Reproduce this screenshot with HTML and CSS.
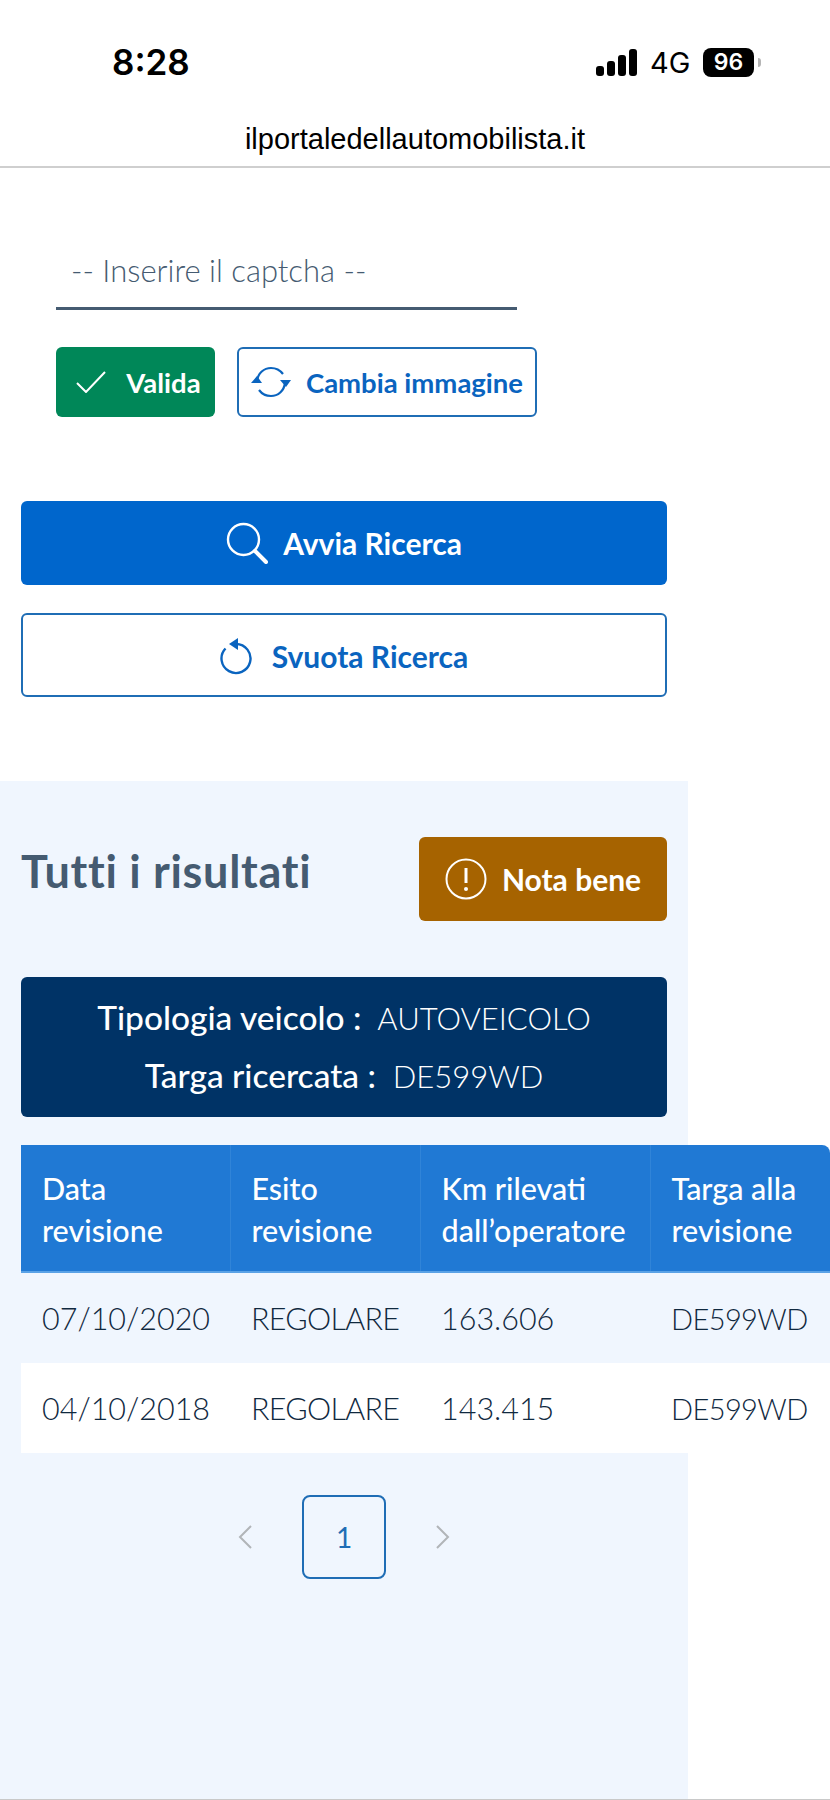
FILE: index.html
```html
<!DOCTYPE html>
<html lang="it">
<head>
    <meta charset="UTF-8">
    <meta name="viewport" content="width=device-width, initial-scale=1.0">
    <title>Il Portale dell'Automobilista</title>
    <link rel="stylesheet" href="styles.css">
</head>
<body>

    <div class="status-bar">
        <span class="clock">8:28</span>
        <div class="status-right">
            <svg class="signal" width="41" height="27" viewBox="0 0 41 27">
                <rect x="0" y="17" width="8" height="10" rx="3"/>
                <rect x="11" y="12" width="8" height="15" rx="3"/>
                <rect x="22" y="6" width="8" height="21" rx="3"/>
                <rect x="33" y="0" width="8" height="27" rx="3"/>
            </svg>
            <span class="network">4G</span>
            <span class="battery">96</span>
            <span class="battery-nub"></span>
        </div>
    </div>
    <div class="url-bar">ilportaledellautomobilista.it</div>

    <div class="search-panel">
        <div class="captcha-input">-- Inserire il captcha --</div>
        <div class="captcha-actions">
            <button class="btn btn-valid">
                <svg width="30" height="22" viewBox="0 0 30 22" fill="none" stroke="currentColor" stroke-width="2"><path d="M1 12l9 9L29 1"/></svg>
                Valida
            </button>
            <button class="btn btn-outline btn-change">
                <svg width="40" height="32" viewBox="0 0 40 32" fill="none" stroke="currentColor" stroke-width="2.2">
                    <path d="M6 15C7 7 13 2 20 2c5 0 9 2 12 6"/>
                    <path d="M34 17c-1 8-7 13-14 13-5 0-9-2-12-6"/>
                    <path d="M0 17l6-7 5 7z" fill="currentColor" stroke="none"/>
                    <path d="M29 14h11l-5 7z" fill="currentColor" stroke="none"/>
                </svg>
                Cambia immagine
            </button>
        </div>
        <button class="btn btn-wide btn-primary">
            <svg width="42" height="42" viewBox="0 0 42 42" fill="none" stroke="currentColor" stroke-width="2.4">
                <circle cx="17.500" cy="17.500" r="15.500"/>
                <path d="M29 29l11 11" stroke-width="4" stroke-linecap="round"/>
            </svg>
            Avvia Ricerca
        </button>
        <button class="btn btn-wide btn-outline btn-reset">
            <svg width="32" height="37" viewBox="0 0 32 37" fill="none" stroke="currentColor" stroke-width="2.4">
                <path d="M16 6A14.500 14.500 0 1 1 5.500 10.500"/>
                <path d="M18 0v12L9 6z" fill="currentColor" stroke="none"/>
            </svg>
            Svuota Ricerca
        </button>
    </div>

    <div class="results-panel">
        <div class="results-head">
            <h2>Tutti i risultati</h2>
            <button class="btn btn-note">
                <svg width="42" height="42" viewBox="0 0 42 42" fill="none" stroke="currentColor" stroke-width="2">
                    <circle cx="21" cy="21" r="19.500"/>
                    <path d="M21 10v15" stroke-width="3"/>
                    <circle cx="21" cy="31" r="2" fill="currentColor" stroke="none"/>
                </svg>
                Nota bene
            </button>
        </div>

        <div class="vehicle-info">
            <p><b>Tipologia veicolo :</b>&nbsp; AUTOVEICOLO</p>
            <p><b>Targa ricercata :</b>&nbsp; DE599WD</p>
        </div>

        <table class="results-table">
            <thead>
                <tr>
                    <th class="col-date">Data<br>revisione</th>
                    <th class="col-result">Esito<br>revisione</th>
                    <th class="col-km">Km rilevati<br>dall’operatore</th>
                    <th class="col-plate">Targa alla<br>revisione</th>
                </tr>
            </thead>
            <tbody>
                <tr>
                    <td>07/10/2020</td>
                    <td class="cell-result">REGOLARE</td>
                    <td>163.606</td>
                    <td class="cell-plate">DE599WD</td>
                </tr>
                <tr>
                    <td>04/10/2018</td>
                    <td class="cell-result">REGOLARE</td>
                    <td>143.415</td>
                    <td class="cell-plate">DE599WD</td>
                </tr>
            </tbody>
        </table>

        <div class="pagination">
            <svg width="14" height="24" viewBox="0 0 14 24" fill="none" stroke="#b1b5b8" stroke-width="2"><path d="M13 1L2 12l11 11"/></svg>
            <span class="page-current">1</span>
            <svg width="14" height="24" viewBox="0 0 14 24" fill="none" stroke="#b1b5b8" stroke-width="2"><path d="M1 1l11 11L1 23"/></svg>
        </div>
    </div>

    <div class="bottom-line"></div>

</body>
</html>
```

FILE: styles.css
```css
body {
    font-family: Lato, "Noto Sans", sans-serif;
    background-color: #fff;
    color: #17324d;
    margin: 0;
    width: 830px;
    height: 1800px;
    overflow: hidden;
}

.status-bar {
    height: 100px;
    padding: 0 69px 0 112px;
    display: flex;
    justify-content: space-between;
    align-items: center;
    font-family: Inter, "Liberation Sans", sans-serif;
    color: #000;
}

.clock {
    font-size: 35px;
    font-weight: 600;
    margin-top: 24px;
}

.status-right {
    display: flex;
    align-items: center;
    margin-top: 24px;
}

.signal {
    fill: #000;
}

.network {
    font-size: 29px;
    margin-left: 13px;
    width: 53px;
}

.battery {
    width: 51px;
    height: 29px;
    background-color: #000;
    color: #fff;
    border-radius: 8px;
    font-size: 23px;
    font-weight: 600;
    line-height: 29px;
    text-align: center;
}

.battery-nub {
    width: 3px;
    height: 9px;
    margin-left: 4px;
    background-color: #b5b5b5;
    border-radius: 0 3px 3px 0;
}

.url-bar {
    height: 66px;
    border-bottom: 2px solid #cfcfcf;
    font-family: "Liberation Sans", sans-serif;
    font-size: 29px;
    line-height: 78px;
    text-align: center;
    color: #000;
    overflow: hidden;
}

.search-panel {
    width: 688px;
    padding-top: 72px;
    padding-bottom: 84px;
}

.captcha-input {
    width: 446px;
    height: 67px;
    margin-left: 56px;
    padding-left: 15px;
    border-bottom: 3px solid #455b71;
    font-size: 31px;
    font-weight: 300;
    line-height: 60px;
    color: #455b71;
}

.captcha-actions {
    display: flex;
    gap: 22px;
    margin: 37px 0 84px 56px;
}

.btn {
    display: flex;
    align-items: center;
    justify-content: center;
    border: none;
    border-radius: 6px;
    font-family: inherit;
    font-weight: bold;
    cursor: pointer;
    padding: 0;
}

.btn-valid {
    width: 159px;
    height: 70px;
    padding-left: 6px;
    gap: 20px;
    background-color: #008758;
    color: #fff;
    font-size: 27.5px;
}

.btn-outline {
    background-color: #fff;
    border: 2px solid #1f6db5;
    color: #0a64bf;
    box-sizing: border-box;
}

.btn-change {
    width: 300px;
    height: 70px;
    gap: 15px;
    font-size: 27.5px;
}

.btn-wide {
    width: 646px;
    height: 84px;
    margin-left: 21px;
    font-size: 30px;
    gap: 15px;
}

.btn-primary {
    background-color: #0066cc;
    color: #fff;
    margin-bottom: 28px;
}

.btn-reset {
    gap: 20px;
    padding-top: 2px;
}

.results-panel {
    width: 688px;
    height: 1018px;
    padding-top: 56px;
    box-sizing: border-box;
    background-color: #f0f6fe;
}

.results-head {
    display: flex;
    justify-content: space-between;
    padding: 0 21px;
}

.results-head h2 {
    margin: 0;
    font-size: 45px;
    font-weight: bold;
    letter-spacing: 0.7px;
    line-height: 68px;
    color: #455b71;
}

.btn-note {
    width: 248px;
    height: 84px;
    gap: 15px;
    background-color: #a66300;
    color: #fff;
    font-size: 30px;
}

.vehicle-info {
    width: 646px;
    height: 140px;
    margin: 56px 0 28px 21px;
    padding-top: 12px;
    box-sizing: border-box;
    background-color: #003366;
    border-radius: 6px;
    color: #fff;
    font-size: 31px;
    font-weight: 300;
    text-align: center;
}

.vehicle-info p {
    margin: 0;
    line-height: 57px;
}

.vehicle-info b {
    font-size: 33.5px;
    font-weight: 500;
}

.results-table {
    width: 809px;
    margin-left: 21px;
    border-collapse: collapse;
    table-layout: fixed;
}

.results-table th {
    box-sizing: border-box;
    height: 127px;
    padding: 2px 0 0 21px;
    background-color: #2079d4;
    border-left: 1px solid #3084d8;
    border-bottom: 2px solid #5aa2e6;
    color: #fff;
    font-size: 30.5px;
    font-weight: 500;
    line-height: 42px;
    text-align: left;
}

.results-table th:first-child {
    border-left: none;
}

.results-table th:last-child {
    border-top-right-radius: 8px;
}

.col-date {
    width: 209px;
}

.col-result {
    width: 190px;
}

.col-km {
    width: 230px;
}

.results-table td {
    height: 90px;
    padding: 0 0 0 21px;
    font-size: 30.5px;
    font-weight: 300;
    color: #10293f;
}

.results-table td.cell-result {
    letter-spacing: -0.7px;
}

.results-table td.cell-plate {
    font-size: 29px;
    letter-spacing: -0.6px;
}

.results-table tbody tr:nth-child(2) td {
    background-color: #fff;
}

.results-table tbody tr:first-child td {
    background-color: #f0f6fe;
}

.pagination {
    display: flex;
    align-items: center;
    justify-content: center;
    width: 688px;
    gap: 50px;
    margin-top: 42px;
}

.page-current {
    width: 84px;
    height: 84px;
    box-sizing: border-box;
    border: 2px solid #1f6db5;
    border-radius: 8px;
    color: #1f6db5;
    font-size: 28px;
    line-height: 80px;
    text-align: center;
}

.bottom-line {
    height: 2px;
    background-color: #c9c9c9;
}
```
